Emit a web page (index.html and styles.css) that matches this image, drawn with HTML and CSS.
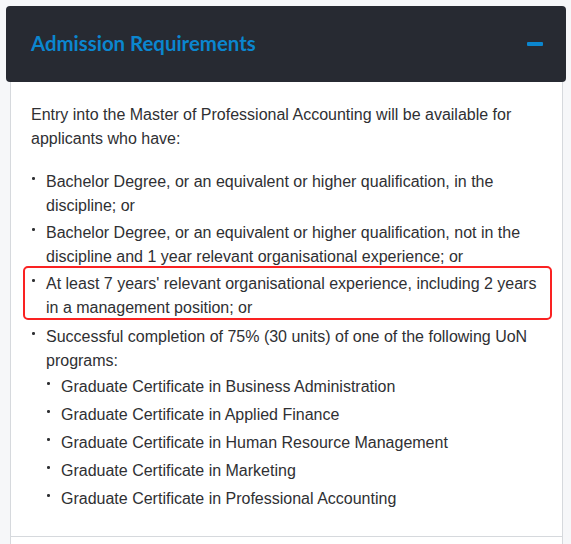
FILE: index.html
```html
<!DOCTYPE html>
<html lang="en">
<head>
<meta charset="utf-8">
<title>Admission Requirements</title>
<link rel="stylesheet" href="styles.css">
</head>
<body>
<div class="accordion">
  <div class="acc-header">
    <h2 class="acc-title">Admission Requirements</h2>
    <span class="acc-toggle" aria-hidden="true"></span>
  </div>
  <div class="acc-body">
    <p class="intro">Entry into the Master of Professional Accounting will be available for applicants who have:</p>
    <ul class="req-list">
      <li>Bachelor Degree, or an equivalent or higher qualification, in the discipline; or</li>
      <li>Bachelor Degree, or an equivalent or higher qualification, not in the discipline and 1 year relevant organisational experience; or</li>
      <li class="highlight">At least 7 years' relevant organisational experience, including 2 years in a management position; or</li>
      <li>Successful completion of 75% (30 units) of one of the following UoN programs:
        <ul class="sub-list">
          <li>Graduate Certificate in Business Administration</li>
          <li>Graduate Certificate in Applied Finance</li>
          <li>Graduate Certificate in Human Resource Management</li>
          <li>Graduate Certificate in Marketing</li>
          <li>Graduate Certificate in Professional Accounting</li>
        </ul>
      </li>
    </ul>
  </div>
  <div class="acc-next"></div>
</div>
</body>
</html>
```

FILE: styles.css
```css
html, body {
  margin: 0;
  padding: 0;
  background: #f6f7f9;
}

body {
  font-family: "Liberation Sans", Arial, sans-serif;
  color: #2f3033;
}

.accordion {
  padding: 6px 5px 0 6px;
}

.acc-header {
  height: 76px;
  background: #272a32;
  border-radius: 4px;
  display: flex;
  align-items: center;
  justify-content: space-between;
  padding: 0 23px 0 25px;
  box-sizing: border-box;
}

.acc-title {
  margin: 0;
  font-family: "Lato", "Open Sans", sans-serif;
  font-weight: 700;
  font-size: 20.4px;
  color: #0b86cf;
  letter-spacing: 0;
  position: relative;
  top: -1px;
}

.acc-toggle {
  display: block;
  width: 16px;
  height: 4px;
  border-radius: 1px;
  background: #0b86cf;
  position: relative;
  top: 0;
}

.acc-body {
  margin: 0 3px 0 4px;
  background: #ffffff;
  border-left: 1px solid #d6d9dd;
  border-right: 1px solid #d6d9dd;
  padding: 21px 20px 21px 20px;
  font-size: 16px;
  line-height: 24px;
}

.intro {
  margin: 0 0 19px 0;
}

.req-list {
  list-style: none;
  margin: 0;
  padding: 0;
}

.req-list > li {
  position: relative;
  padding-left: 15px;
  margin-bottom: 3px;
}

.req-list li::before {
  content: "";
  position: absolute;
  left: 1px;
  top: 7px;
  width: 2.5px;
  height: 2.5px;
  border-radius: 50%;
  background: #2f3033;
}

.req-list > li.highlight {
  margin-top: 2px;
  margin-bottom: 5px;
}

.req-list > li.highlight::after {
  content: "";
  position: absolute;
  left: -8px;
  right: -10px;
  top: -6px;
  bottom: 0;
  border: 2px solid #fa2222;
  border-radius: 5px;
}

.sub-list {
  list-style: none;
  margin: 2px 0 0 0;
  padding: 0 0 0 1px;
}

.sub-list > li {
  position: relative;
  padding-left: 14px;
  margin-bottom: 4px;
}

.sub-list > li::before {
  left: 0;
}

.acc-next {
  margin: 0 3px 0 4px;
  height: 20px;
  background: #ffffff;
  border-top: 1px solid #d6d9dd;
  border-left: 1px solid #d6d9dd;
  border-right: 1px solid #d6d9dd;
}
```
